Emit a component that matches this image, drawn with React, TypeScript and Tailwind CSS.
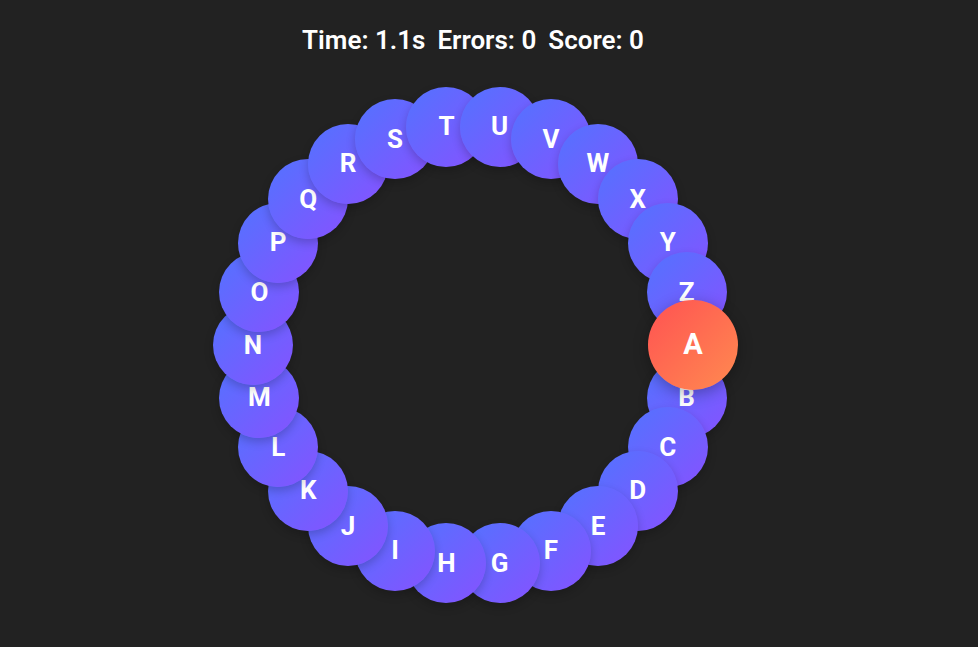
import { useState, type CSSProperties } from "react";

const LETTERS = "ABCDEFGHIJKLMNOPQRSTUVWXYZ".split("");
const RADIUS = 220;

function position(index: number): CSSProperties {
  const angle = (index / LETTERS.length) * Math.PI * 2;
  return {
    left: `calc(50% + ${Math.cos(angle) * RADIUS}px)`,
    top: `calc(50% + ${Math.sin(angle) * RADIUS}px)`,
  };
}

export default function App() {
  const [current, setCurrent] = useState(0);
  const [errors, setErrors] = useState(0);
  const [score, setScore] = useState(0);

  const press = (index: number) => {
    if (index === current) {
      setScore(score + 1);
      setCurrent((current + 1) % LETTERS.length);
    } else {
      setErrors(errors + 1);
    }
  };

  return (
    <main className="flex min-h-screen flex-col items-center bg-[#222222] pt-6 pr-8 font-['Roboto',sans-serif] font-bold text-white">
      <div className="flex gap-3 text-[26px] leading-8 font-semibold">
        <span>Time: 1.1s</span>
        <span>Errors: {errors}</span>
        <span>Score: {score}</span>
      </div>
      <div className="relative mt-[29px] size-[520px]">
        {LETTERS.map((letter, index) => (
          <button
            key={letter}
            type="button"
            onClick={() => press(index)}
            style={position(index)}
            className={
              index === current
                ? "absolute z-10 flex size-[90px] -translate-x-1/2 -translate-y-1/2 items-center justify-center rounded-full bg-linear-[135deg,#ff5252,#ff8a50] pb-0.5 text-[29px] leading-8 shadow-[0_4px_15px_rgba(0,0,0,0.3)]"
                : "absolute flex size-20 -translate-x-1/2 -translate-y-1/2 items-center justify-center rounded-full bg-linear-[135deg,#5273ff,#8652ff] pb-px text-[26px] leading-8 shadow-[0_4px_10px_rgba(0,0,0,0.2)]"
            }
          >
            {letter}
          </button>
        ))}
      </div>
    </main>
  );
}
